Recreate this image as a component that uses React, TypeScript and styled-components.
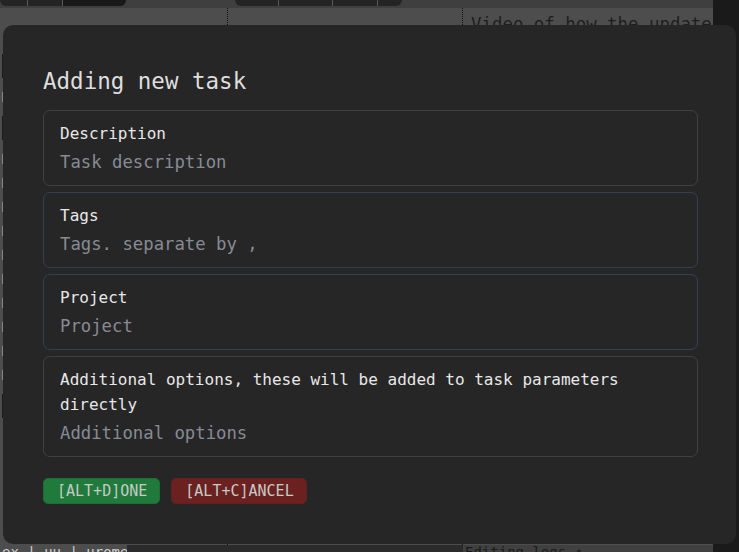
import React from "react";
import styled, { createGlobalStyle } from "styled-components";

const Global = createGlobalStyle`
  html, body { margin: 0; padding: 0; background: #4d4d4d; overflow: hidden; }
  body { font-family: "DejaVu Sans Mono", "Liberation Mono", monospace; }
  * { box-sizing: border-box; }
`;

const Page = styled.div`
  width: 739px;
  height: 552px;
  display: flex;
`;

const Workspace = styled.div`
  flex: 1;
  display: flex;
  flex-direction: column;
  min-width: 0;
`;

const ScrollStrip = styled.div`
  width: 26px;
  background: #1a1a1a;
`;

const TopBar = styled.div`
  height: 8px;
  background: #3f3f3f;
  display: flex;
  gap: 109px;
`;

const TabGroup = styled.div<{ $width: number }>`
  width: ${(p) => p.$width}px;
  height: 6px;
  display: flex;
  background: #242424;
  border-radius: 0 0 6px 6px;
  overflow: hidden;
  margin-left: ${(p) => (p.$width > 140 ? 0 : 0)}px;
`;

const TabSeg = styled.div<{ $w: number; $dark?: boolean }>`
  width: ${(p) => p.$w}px;
  height: 100%;
  background: ${(p) => (p.$dark ? "#191919" : "transparent")};
  border-right: 1px solid #575757;
  &:last-child { border-right: none; }
`;

const Columns = styled.div`
  flex: 1;
  display: grid;
  grid-template-columns: 228px 235px 1fr;
`;

const Col = styled.div<{ $dotted?: boolean }>`
  border-right: ${(p) => (p.$dotted ? "1px dotted #111" : "none")};
  padding: 6px 0 0 8px;
  overflow: hidden;
`;

const LeftCol = styled.div`
  border-right: 1px dotted #111;
  display: flex;
  flex-direction: column;
  gap: 14px;
  padding-top: 46px;
`;

const LeftRow = styled.div<{ $dark?: boolean }>`
  height: ${(p) => (p.$dark ? 24 : 10)}px;
  width: 3px;
  background: ${(p) => (p.$dark ? "#1c1c1c" : "transparent")};
  border-left: ${(p) => (p.$dark ? "none" : "1px solid #888")};
  margin-left: 2px;
`;

const BgText = styled.div`
  font-size: 17.4px;
  color: #1e1e1e;
  white-space: nowrap;
`;

const StatusBar = styled.div`
  height: 7px;
  display: grid;
  grid-template-columns: 127px 336px 1fr;
  font-size: 14px;
  line-height: 14px;
  overflow: hidden;
`;

const StatusCell = styled.div<{ $bg: string; $fg: string }>`
  background: ${(p) => p.$bg};
  color: ${(p) => p.$fg};
  padding-left: 2px;
  white-space: nowrap;
`;

const Overlay = styled.div`
  position: fixed;
  inset: 0;
  padding: 25px 3px 8px 3px;
  display: flex;
`;

const Modal = styled.div`
  flex: 1;
  background: #262626;
  border-radius: 10px;
  padding: 40px 38px 39px 40px;
  display: flex;
  flex-direction: column;
`;

const Title = styled.h1`
  margin: 0 0 13px 0;
  font-size: 22.5px;
  line-height: 32px;
  font-weight: normal;
  color: #dedede;
`;

const Fields = styled.div`
  display: flex;
  flex-direction: column;
  gap: 6px;
`;

const Field = styled.label<{ $accent?: boolean }>`
  display: flex;
  flex-direction: column;
  gap: 3px;
  padding: 10px 16px;
  border: 1px solid ${(p) => (p.$accent ? "#363f52" : "#404040")};
  border-radius: 7px;
`;

const Label = styled.span`
  font-size: 16px;
  line-height: 25px;
  color: #e8e8e8;
`;

const Input = styled.input`
  background: transparent;
  border: none;
  outline: none;
  padding: 0;
  font-family: inherit;
  font-size: 17.3px;
  line-height: 26px;
  height: 26px;
  color: #e8e8e8;
  &::placeholder { color: #878b94; }
`;

const Buttons = styled.div`
  display: flex;
  gap: 11px;
  margin-top: 21px;
`;

const Button = styled.button<{ $variant: "ok" | "cancel" }>`
  height: 26px;
  padding: 0 12px 0 13px;
  border-radius: 5px;
  border: 1px solid ${(p) => (p.$variant === "ok" ? "#1c6e35" : "#632020")};
  background: ${(p) => (p.$variant === "ok" ? "#1f7a3b" : "#6c2121")};
  color: #c6cbc6;
  font-family: inherit;
  font-size: 15px;
  line-height: 24px;
  cursor: pointer;
`;

const fields = [
  { label: "Description", placeholder: "Task description", accent: false },
  { label: "Tags", placeholder: "Tags. separate by ,", accent: true },
  { label: "Project", placeholder: "Project", accent: true },
  {
    label: "Additional options, these will be added to task parameters directly",
    placeholder: "Additional options",
    accent: false,
  },
];

export default function App() {
  return (
    <>
      <Global />
      <Page>
        <Workspace>
          <TopBar>
            <TabGroup $width={126}>
              <TabSeg $w={28} />
              <TabSeg $w={35} />
              <TabSeg $w={63} $dark />
            </TabGroup>
            <TabGroup $width={167}>
              <TabSeg $w={44} />
              <TabSeg $w={54} />
              <TabSeg $w={45} />
              <TabSeg $w={24} />
            </TabGroup>
          </TopBar>
          <Columns>
            <LeftCol>
              <LeftRow $dark />
              <LeftRow />
              <LeftRow $dark />
              <LeftRow />
              <LeftRow />
              <LeftRow />
              <LeftRow />
              <LeftRow />
              <LeftRow />
              <LeftRow />
              <LeftRow />
              <LeftRow />
              <LeftRow />
              <LeftRow $dark />
            </LeftCol>
            <Col $dotted />
            <Col>
              <BgText>Video of how the update</BgText>
            </Col>
          </Columns>
          <StatusBar>
            <StatusCell $bg="#4d4d4d" $fg="#cfcfcf">ex | uu | urome</StatusCell>
            <StatusCell $bg="#2b2b2b" $fg="#2b2b2b"> </StatusCell>
            <StatusCell $bg="#404040" $fg="#1a1a1a">Editing logs ↑</StatusCell>
          </StatusBar>
        </Workspace>
        <ScrollStrip />
      </Page>
      <Overlay>
        <Modal>
          <Title>Adding new task</Title>
          <Fields>
            {fields.map((f) => (
              <Field key={f.label} $accent={f.accent}>
                <Label>{f.label}</Label>
                <Input placeholder={f.placeholder} />
              </Field>
            ))}
          </Fields>
          <Buttons>
            <Button $variant="ok">[ALT+D]ONE</Button>
            <Button $variant="cancel">[ALT+C]ANCEL</Button>
          </Buttons>
        </Modal>
      </Overlay>
    </>
  );
}
